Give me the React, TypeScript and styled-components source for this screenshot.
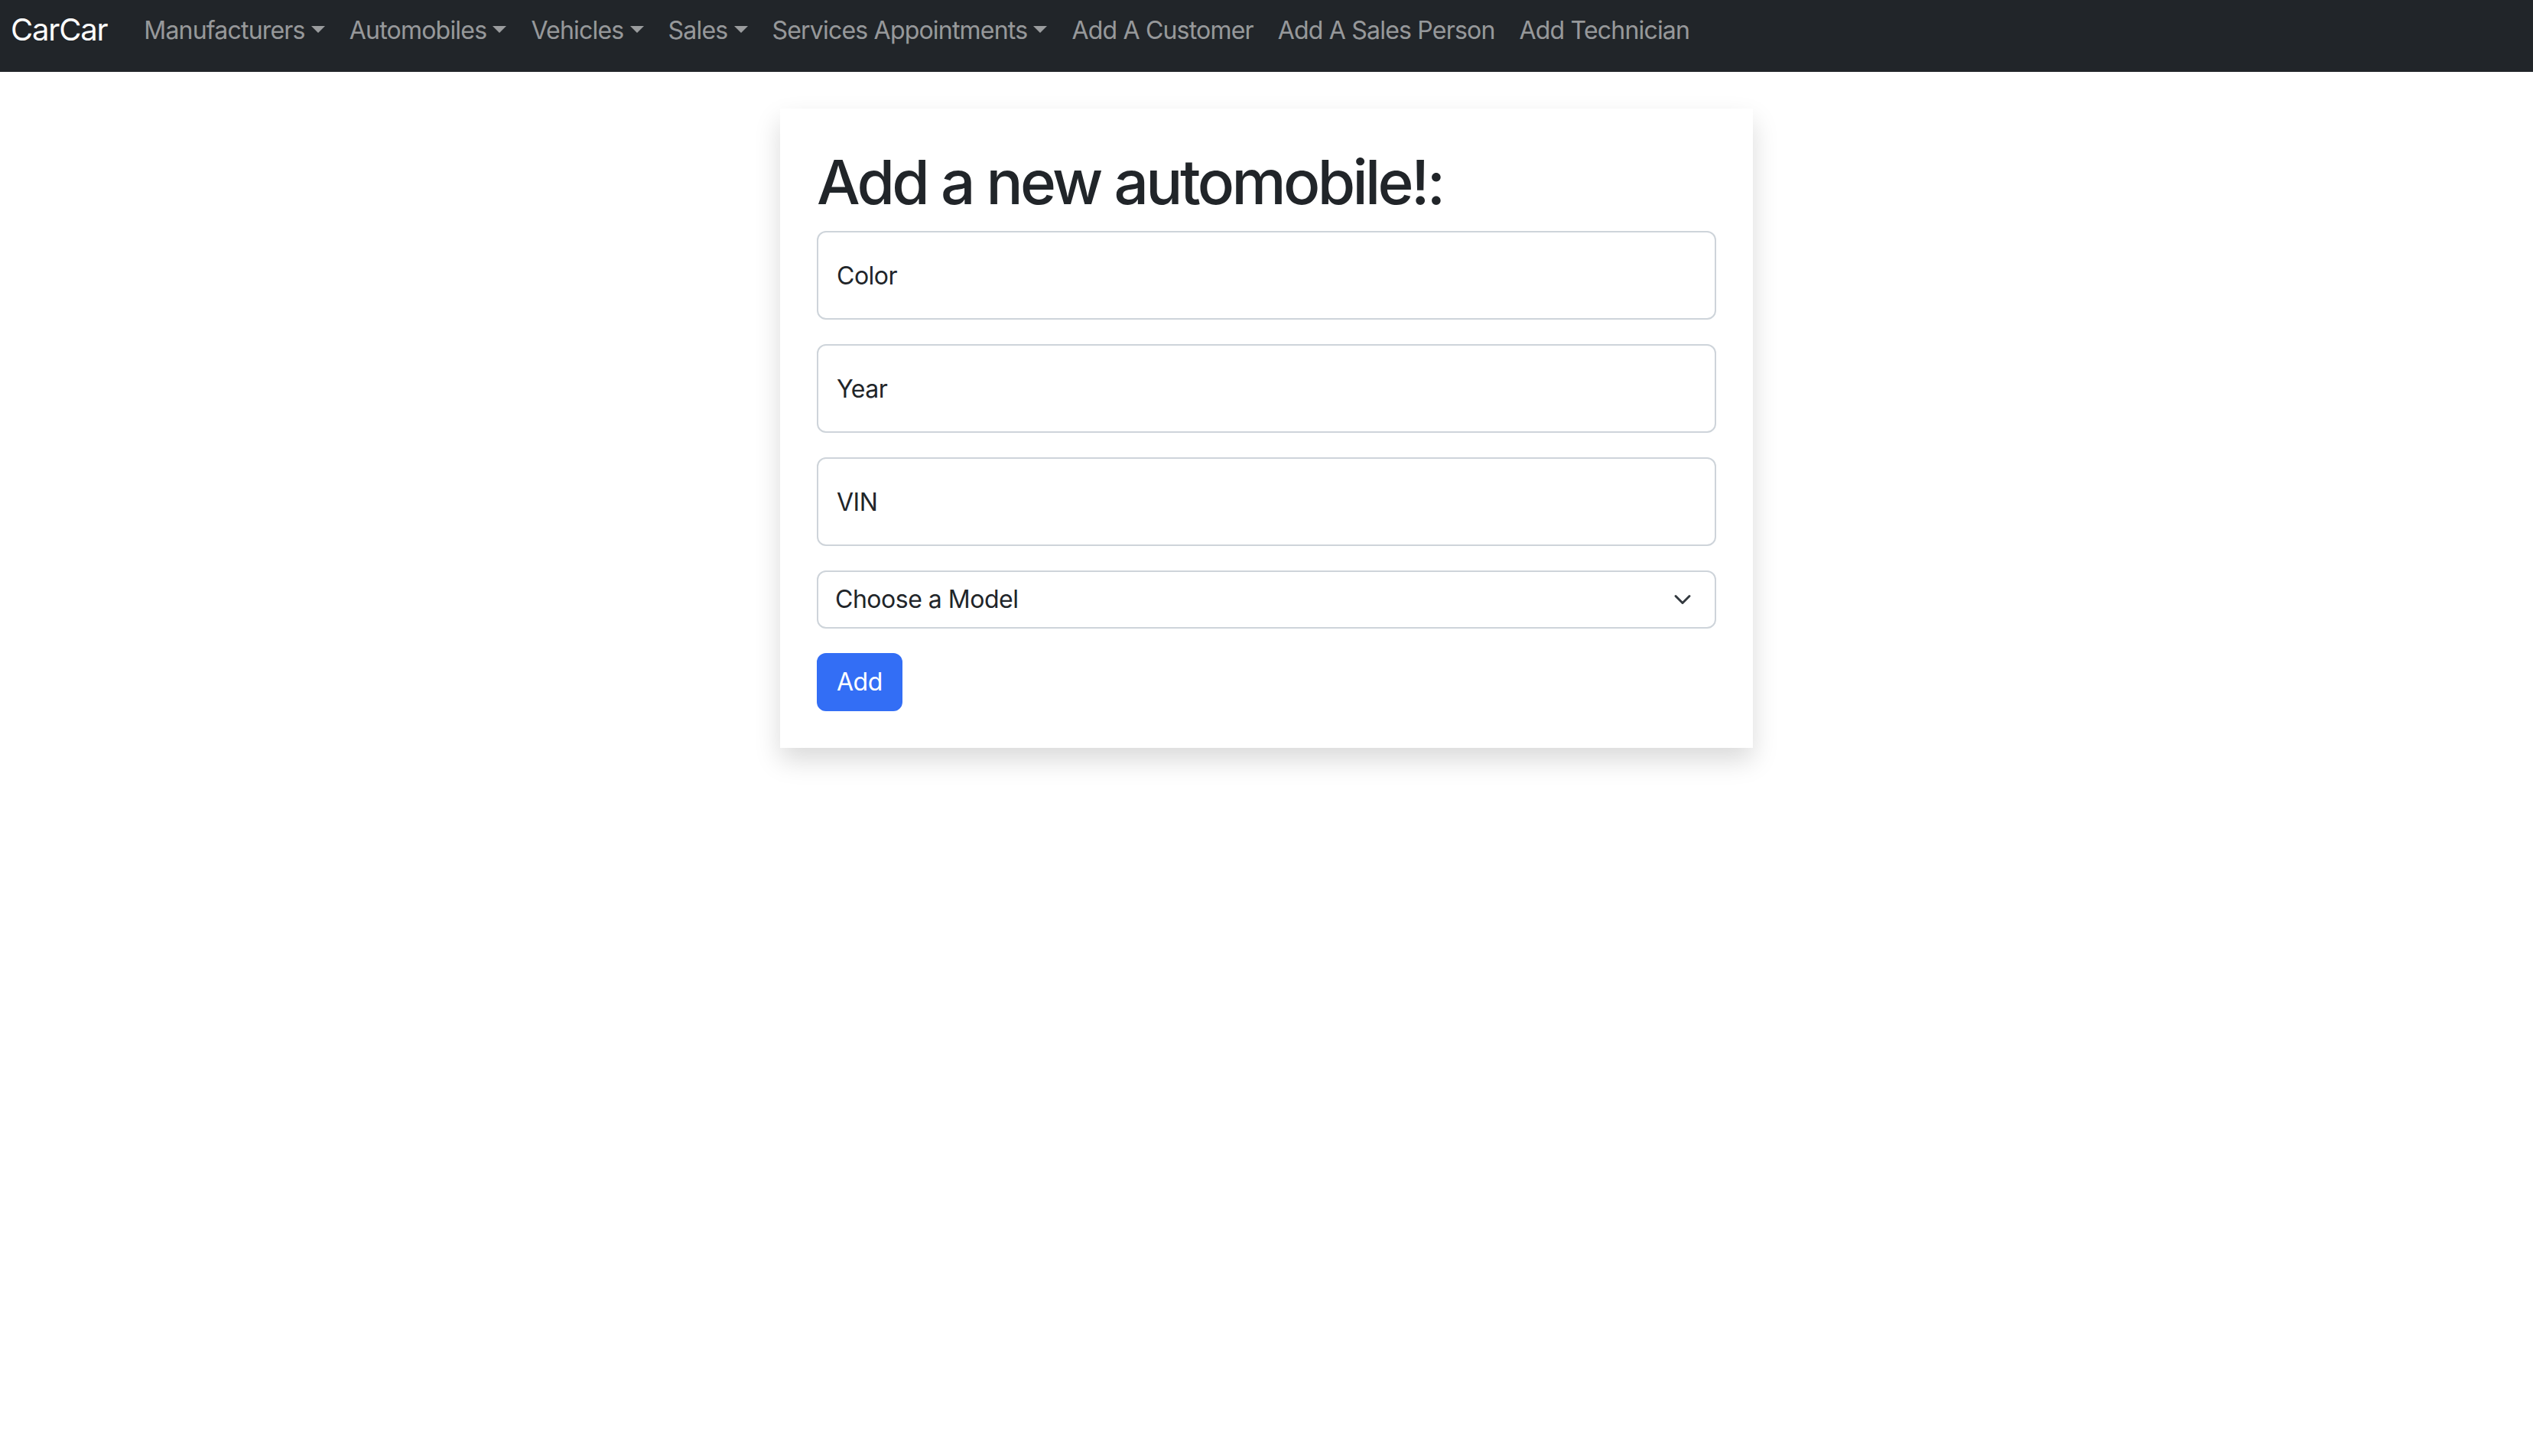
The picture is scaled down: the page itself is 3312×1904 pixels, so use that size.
import styled, { createGlobalStyle } from "styled-components";

const GlobalStyle = createGlobalStyle`
  html, body {
    margin: 0;
    padding: 0;
    background: #fff;
  }
  body {
    font-family: Inter, "Noto Sans", "Liberation Sans", sans-serif;
    color: #212529;
    letter-spacing: -0.03em;
  }
`;

const links = [
  { label: "Manufacturers", dropdown: true },
  { label: "Automobiles", dropdown: true },
  { label: "Vehicles", dropdown: true },
  { label: "Sales", dropdown: true },
  { label: "Services Appointments", dropdown: true },
  { label: "Add A Customer", dropdown: false },
  { label: "Add A Sales Person", dropdown: false },
  { label: "Add Technician", dropdown: false },
];

const fields = ["Color", "Year", "VIN"];

const App = () => {
  return (
    <Page>
      <GlobalStyle />
      <Navbar>
        <Brand href="#">CarCar</Brand>
        <NavList>
          {links.map((l) => (
            <NavItem key={l.label}>
              <NavLink href="#" $dropdown={l.dropdown}>
                {l.label}
              </NavLink>
            </NavItem>
          ))}
        </NavList>
      </Navbar>
      <Column>
        <Card>
          <Title>Add a new automobile!:</Title>
          <form onSubmit={(e) => e.preventDefault()}>
            {fields.map((f) => (
              <Field key={f}>
                <Input placeholder={f} name={f.toLowerCase()} type="text" />
              </Field>
            ))}
            <Field>
              <SelectWrap>
                <Select defaultValue="">
                  <option value="">Choose a Model</option>
                </Select>
                <Chevron viewBox="0 0 16 16" width="32" height="24">
                  <path
                    d="m2 5 6 6 6-6"
                    fill="none"
                    stroke="#343a40"
                    strokeWidth="2"
                    strokeLinecap="round"
                    strokeLinejoin="round"
                  />
                </Chevron>
              </SelectWrap>
            </Field>
            <Button type="submit">Add</Button>
          </form>
        </Card>
      </Column>
    </Page>
  );
};
export default App;

const Page = styled.div`
  min-height: 1904px;
`;

const Navbar = styled.nav`
  display: flex;
  align-items: flex-start;
  height: 94px;
  padding: 0 14px;
  background-color: #212529;
  box-sizing: border-box;
`;

const Brand = styled.a`
  font-size: 40px;
  line-height: 60px;
  padding-top: 9px;
  margin-right: 32px;
  color: #fff;
  text-decoration: none;
  white-space: nowrap;
  letter-spacing: -0.03em;
`;

const NavList = styled.ul`
  display: flex;
  list-style: none;
  margin: 0;
  padding: 0;
`;

const NavItem = styled.li``;

const NavLink = styled.a<{ $dropdown: boolean }>`
  display: block;
  padding: 16px 16px 14px;
  font-size: 32px;
  line-height: 48px;
  letter-spacing: -0.025em;
  color: rgba(255, 255, 255, 0.55);
  text-decoration: none;
  white-space: nowrap;

  &::after {
    content: ${(p) => (p.$dropdown ? '""' : "none")};
    display: inline-block;
    margin-left: 0.255em;
    vertical-align: 0.255em;
    border-top: 0.3em solid;
    border-right: 0.3em solid transparent;
    border-left: 0.3em solid transparent;
    border-bottom: 0;
  }
`;

const Column = styled.main`
  width: 1272px;
  margin: 48px auto 0;
`;

const Card = styled.div`
  background: #fff;
  padding: 48px;
  box-shadow: 0 16px 32px rgba(0, 0, 0, 0.15);
`;

const Title = styled.h1`
  margin: 0 0 16px;
  font-size: 80px;
  font-weight: 500;
  line-height: 1.2;
  letter-spacing: -0.045em;
  color: #212529;
`;

const Field = styled.div`
  margin-bottom: 32px;
`;

const Input = styled.input`
  display: block;
  width: 100%;
  height: 116px;
  box-sizing: border-box;
  padding: 0 24px;
  font-family: inherit;
  font-size: 32px;
  letter-spacing: inherit;
  color: #212529;
  background: #fff;
  border: 2px solid #ced4da;
  border-radius: 12px;
  outline: none;

  &::placeholder {
    color: #212529;
  }
`;

const SelectWrap = styled.div`
  position: relative;
`;

const Select = styled.select`
  display: block;
  width: 100%;
  height: 76px;
  box-sizing: border-box;
  padding: 12px 72px 12px 22px;
  font-family: inherit;
  font-size: 32px;
  letter-spacing: inherit;
  line-height: 48px;
  color: #212529;
  background: #fff;
  border: 2px solid #ced4da;
  border-radius: 12px;
  appearance: none;
  outline: none;
`;

const Chevron = styled.svg`
  position: absolute;
  right: 28px;
  top: 26px;
  pointer-events: none;
`;

const Button = styled.button`
  display: inline-block;
  padding: 12px 24px;
  font-family: inherit;
  font-size: 32px;
  letter-spacing: inherit;
  line-height: 48px;
  color: #fff;
  background-color: #336ef5;
  border: 2px solid #336ef5;
  border-radius: 12px;
  cursor: pointer;
`;
